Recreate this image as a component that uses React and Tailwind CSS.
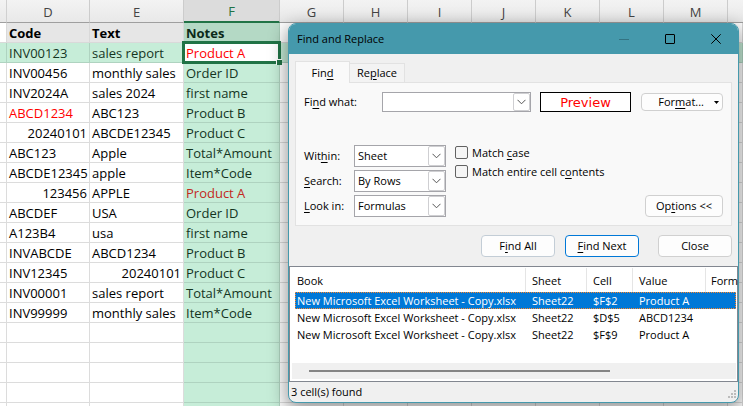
import React, { useState } from 'react';
import { clsx } from 'clsx';

const rows = [
    ['INV00123', 'sales report', 'Product A'],
    ['INV00456', 'monthly sales', 'Order ID'],
    ['INV2024A', 'sales 2024', 'first name'],
    ['ABCD1234', 'ABC123', 'Product B'],
    [20240101, 'ABCDE12345', 'Product C'],
    ['ABC123', 'Apple', 'Total*Amount'],
    ['ABCDE12345', 'apple', 'Item*Code'],
    [123456, 'APPLE', 'Product A'],
    ['ABCDEF', 'USA', 'Order ID'],
    ['A123B4', 'usa', 'first name'],
    ['INVABCDE', 'ABCD1234', 'Product B'],
    ['INV12345', 20240101, 'Product C'],
    ['INV00001', 'sales report', 'Total*Amount'],
    ['INV99999', 'monthly sales', 'Item*Code'],
    ['', '', ''],
    ['', '', ''],
    ['', '', ''],
    ['', '', ''],
    ['', '', ''],
];

const results = [
    { book: 'New Microsoft Excel Worksheet - Copy.xlsx', sheet: 'Sheet22', cell: '$F$2', value: 'Product A' },
    { book: 'New Microsoft Excel Worksheet - Copy.xlsx', sheet: 'Sheet22', cell: '$D$5', value: 'ABCD1234' },
    { book: 'New Microsoft Excel Worksheet - Copy.xlsx', sheet: 'Sheet22', cell: '$F$9', value: 'Product A' },
];

const letters = ['D', 'E', 'F', 'G', 'H', 'I', 'J', 'K', 'L', 'M'];
const emptyCols = ['G', 'H', 'I', 'J', 'K', 'L', 'M', 'N'];

// cells whose font is red, as "row-column"
const redCells = ['0-2', '3-0', '7-2'];

const Sheet = () => (
    <table className="w-full table-fixed border-separate border-spacing-0 font-['Open_Sans','Noto_Sans',sans-serif] text-[13px] leading-[17px]">
        <colgroup>
            <col className="w-[7px]" />
            <col className="w-[83px]" />
            <col className="w-[94px]" />
            <col className="w-[96px]" />
            {emptyCols.slice(0, 7).map((c) => (
                <col key={c} className="w-16" />
            ))}
            <col />
        </colgroup>
        <thead>
            <tr className="h-[23px] bg-linear-to-b from-[#f3f3f3] to-[#e8e8e8] text-[#444444]">
                <th className="border-b border-r border-b-[#9f9f9f] border-r-[#d0d0d0] p-0" />
                {letters.map((l) => (
                    <th
                        key={l}
                        className={clsx(
                            'border-r border-r-[#cccccc] p-0 pt-0.5 font-normal',
                            l === 'F' ? 'border-b-2 border-b-[#217346] bg-[#dcdcdc] text-[#217346]' : 'border-b border-b-[#9f9f9f]'
                        )}
                    >
                        {l}
                    </th>
                ))}
                <th className="border-b border-b-[#9f9f9f] p-0" />
            </tr>
        </thead>
        <tbody>
            <tr className="h-5 font-bold text-black">
                <td className="border-b border-r border-[#d9d9d9] p-0" />
                <td className="border-b border-r border-[#d9d9d9] bg-[#e6e6e6] px-0.5 pt-0.5 pb-0">Code</td>
                <td className="border-b border-r border-[#d9d9d9] bg-[#e6e6e6] px-0.5 pt-0.5 pb-0">Text</td>
                <td className="border-b border-r border-[#a5cbb6] bg-[#b4d9c5] px-0.5 pt-0.5 pb-0 text-[#0b2a19]">Notes</td>
                {emptyCols.map((c) => (
                    <td key={c} className="border-b border-r border-[#d9d9d9] p-0" />
                ))}
            </tr>
            {rows.map((row, r) => {
                const current = r === 0;
                return (
                    <tr key={r} className="h-5">
                        <td className={clsx('border-b border-r p-0', current ? 'border-[#afd3c0] bg-[#c6edd8]' : 'border-[#dcdcdc]')} />
                        {row.map((value, c) => {
                            const tinted = current || c === 2;
                            const active = current && c === 2;
                            const red = redCells.includes(`${r}-${c}`);
                            return (
                                <td
                                    key={c}
                                    className={clsx(
                                        'border-b border-r px-0.5 pt-0.5 pb-0 whitespace-nowrap',
                                        tinted ? 'border-[#afd3c0]' : 'border-[#dcdcdc]',
                                        tinted && !active && 'bg-[#c6edd8]',
                                        typeof value === 'number' && 'text-right',
                                        active && 'relative',
                                        red ? (tinted && !active ? 'text-[#c3281c]' : 'text-[#ff0000]') : tinted ? 'text-[#14351f]' : 'text-black'
                                    )}
                                >
                                    {value}
                                    {active && (
                                        <>
                                            <span className="absolute -inset-x-0.5 -inset-y-0.5 border-[3px] border-[#217346]" />
                                            <span className="absolute -right-[3px] -bottom-[3px] h-[6px] w-[6px] border-t border-l border-white bg-[#217346]" />
                                        </>
                                    )}
                                </td>
                            );
                        })}
                        {emptyCols.map((c) => (
                            <td key={c} className={clsx('border-b border-r p-0', current ? 'border-[#afd3c0] bg-[#c6edd8]' : 'border-[#dcdcdc]')} />
                        ))}
                    </tr>
                );
            })}
        </tbody>
    </table>
);

const Chevron = () => (
    <svg viewBox="0 0 9 6" className="h-1.5 w-[9px]" fill="none" stroke="#555555" strokeWidth="1">
        <path d="M0.5 0.8 4.5 4.8 8.5 0.8" />
    </svg>
);

const Key = ({ children }) => <span className="underline underline-offset-2">{children}</span>;

const Dropdown = ({ id, label, options }) => (
    <div className="flex items-center">
        <label htmlFor={id} className="w-[50px]">{label}</label>
        <div className="relative">
            <select id={id} className="h-[22px] w-[92px] appearance-none border border-[#a5a5aa] bg-white pl-[3px] outline-none">
                {options.map((o) => (
                    <option key={o}>{o}</option>
                ))}
            </select>
            <span className="pointer-events-none absolute inset-y-px right-px flex w-[17px] items-center justify-center rounded-xs border border-[#cfcfd2] bg-white">
                <Chevron />
            </span>
        </div>
    </div>
);

const Check = ({ id, children }) => (
    <div className="flex h-[19px] items-center gap-1">
        <input id={id} type="checkbox" className="h-[13px] w-[13px] appearance-none rounded-xs border border-[#626262] bg-[#f5f5f5] checked:bg-[#0078d7]" />
        <label htmlFor={id}>{children}</label>
    </div>
);

const PushButton = ({ className, children }) => (
    <button type="button" className={clsx('h-[22px] rounded border bg-[#fdfdfd]', className)}>
        {children}
    </button>
);

const ResultList = () => {
    const [selected, setSelected] = useState(0);

    return (
        <div className="border border-[#828790] bg-white pt-px pr-px pb-0.5 pl-0.5">
            <div className="pl-[3px]">
                <table className="w-full table-fixed border-separate border-spacing-0 text-left leading-[17px] whitespace-nowrap">
                    <colgroup>
                        <col className="w-[231px]" />
                        <col className="w-[61px]" />
                        <col className="w-[46px]" />
                        <col className="w-[73px]" />
                        <col />
                    </colgroup>
                    <thead>
                        <tr className="h-6">
                            {['Book', 'Sheet', 'Cell', 'Value'].map((h) => (
                                <th key={h} className={clsx('border-r border-[#e5e5e5] p-0 font-normal', h === 'Book' ? 'pl-0.5' : 'pl-1.5')}>{h}</th>
                            ))}
                            <th className="p-0 pl-[5px] font-normal">Form</th>
                        </tr>
                    </thead>
                    <tbody>
                        {results.map((item, i) => (
                            <tr
                                key={item.cell}
                                onClick={() => setSelected(i)}
                                className={clsx('h-[17px]', i === selected && 'bg-[#0078d7] text-white outline-1 -outline-offset-1 outline-dotted outline-[#ff8728]')}
                            >
                                <td className="p-0 pl-0.5">{item.book}</td>
                                <td className="p-0 pl-1.5">{item.sheet}</td>
                                <td className="p-0 pl-1.5">{item.cell}</td>
                                <td className="p-0 pl-1.5">{item.value}</td>
                                <td className="p-0" />
                            </tr>
                        ))}
                    </tbody>
                </table>
            </div>
            <div className="mt-5 flex h-4 items-center bg-[#f0f0f0] pl-[17px]">
                <div className="h-0.5 w-[301px] bg-[#858585]" />
            </div>
        </div>
    );
};

const FindDialog = () => {
    const [what, setWhat] = useState('');

    return (
        <section
            aria-label="Find and Replace"
            className="absolute top-[23px] left-72 w-[451px] overflow-hidden rounded-lg border border-[#4599ac] bg-[#f0f0f0] font-['Open_Sans','Noto_Sans',sans-serif] text-[11px] leading-4 text-black shadow-[0_6px_18px_2px_rgba(0,0,0,0.4)]"
        >
            <header className="flex h-[30px] items-center justify-between bg-[#4599ac] pr-[17px] pl-2">
                <h1>Find and Replace</h1>
                <div className="flex items-center gap-9">
                    <button type="button" aria-label="Minimize" disabled>
                        <svg viewBox="0 0 10 10" className="h-2.5 w-2.5" stroke="#347382">
                            <path d="M0 5.5H10" />
                        </svg>
                    </button>
                    <button type="button" aria-label="Maximize">
                        <svg viewBox="0 0 10 10" className="h-2.5 w-2.5" fill="none" stroke="#000">
                            <rect x="0.5" y="0.5" width="9" height="9" rx="0.5" />
                        </svg>
                    </button>
                    <button type="button" aria-label="Close window">
                        <svg viewBox="0 0 10 10" className="h-2.5 w-2.5" stroke="#000">
                            <path d="M0.3 0.3 9.7 9.7M9.7 0.3 0.3 9.7" />
                        </svg>
                    </button>
                </div>
            </header>

            <div className="px-1.5 pt-[7px]">
                <div role="tablist" className="flex items-end">
                    <button type="button" role="tab" aria-selected="true" className="relative z-10 -mb-px h-[22px] w-[55px] border border-b-0 border-[#e2e2e2] bg-[#f9f9f9]">
                        Fin<Key>d</Key>
                    </button>
                    <button type="button" role="tab" aria-selected="false" className="h-[19px] w-[55px] border border-b-0 border-l-0 border-[#e2e2e2] bg-[#f3f3f3]">
                        Re<Key>p</Key>lace
                    </button>
                </div>

                <div className="border border-[#e2e2e2] bg-[#f9f9f9] px-2 pt-[9px] pb-2">
                    <div className="flex items-center">
                        <label htmlFor="find-what" className="w-[78px]">Fi<Key>n</Key>d what:</label>
                        <div className="flex h-5 w-[149px] border border-[#a5a5aa] bg-white">
                            <input id="find-what" value={what} onChange={(e) => setWhat(e.target.value)} className="min-w-0 flex-1 px-1 outline-none" />
                            <button type="button" aria-label="Recent searches" className="flex w-[17px] items-center justify-center rounded-xs border border-[#cfcfd2]">
                                <Chevron />
                            </button>
                        </div>
                        <div className="ml-[9px] flex h-5 w-[91px] items-center justify-center border border-black bg-white pt-px font-['DejaVu_Sans',sans-serif] text-[13px] text-[#ff0000]">Preview</div>
                        <button type="button" className="ml-auto flex h-[18px] w-[82px] items-center justify-end gap-2.5 rounded border border-[#d0d0d0] bg-[#fdfdfd] pr-[3px]">
                            <span>For<Key>m</Key>at...</span>
                            <svg viewBox="0 0 5 3" className="h-[3px] w-[5px]">
                                <path d="M0 0H5L2.5 3Z" />
                            </svg>
                        </button>
                    </div>

                    <div className="mt-[33px] flex gap-[9px]">
                        <div className="flex flex-col gap-[3px]">
                            <Dropdown id="within" label={<>Wit<Key>h</Key>in:</>} options={['Sheet', 'Workbook']} />
                            <Dropdown id="search" label={<><Key>S</Key>earch:</>} options={['By Rows', 'By Columns']} />
                            <Dropdown id="look-in" label={<><Key>L</Key>ook in:</>} options={['Formulas', 'Values', 'Notes', 'Comments']} />
                        </div>
                        <div className="-mt-0.5">
                            <Check id="match-case">Match <Key>c</Key>ase</Check>
                            <Check id="match-entire">Match entire cell c<Key>o</Key>ntents</Check>
                        </div>
                        <PushButton className="ml-auto w-[78px] self-end border-[#d0d0d0]">Op<Key>t</Key>ions &lt;&lt;</PushButton>
                    </div>
                </div>

                <div className="flex justify-end py-[9px]">
                    <PushButton className="mr-2.5 w-[74px] border-[#c3cdd6]">F<Key>i</Key>nd All</PushButton>
                    <PushButton className="mr-[19px] w-[74px] border-[#0078d7]"><Key>F</Key>ind Next</PushButton>
                    <PushButton className="w-[74px] border-[#d0d0d0]">Close</PushButton>
                </div>
            </div>

            <ResultList />

            <footer className="flex h-5 items-center justify-between px-0.5">
                <span>3 cell(s) found</span>
                <svg viewBox="0 0 8 8" className="mt-1 h-2 w-2" fill="#bcbcbc">
                    <path d="M6 0h2v2h-2zM3 3h2v2h-2zM6 3h2v2h-2zM0 6h2v2h-2zM3 6h2v2h-2zM6 6h2v2h-2z" />
                </svg>
            </footer>
        </section>
    );
};

const App = () => {
    return (
        <main className="relative h-screen overflow-hidden bg-white">
            <Sheet />
            <FindDialog />
        </main>
    );
};

export default App;
